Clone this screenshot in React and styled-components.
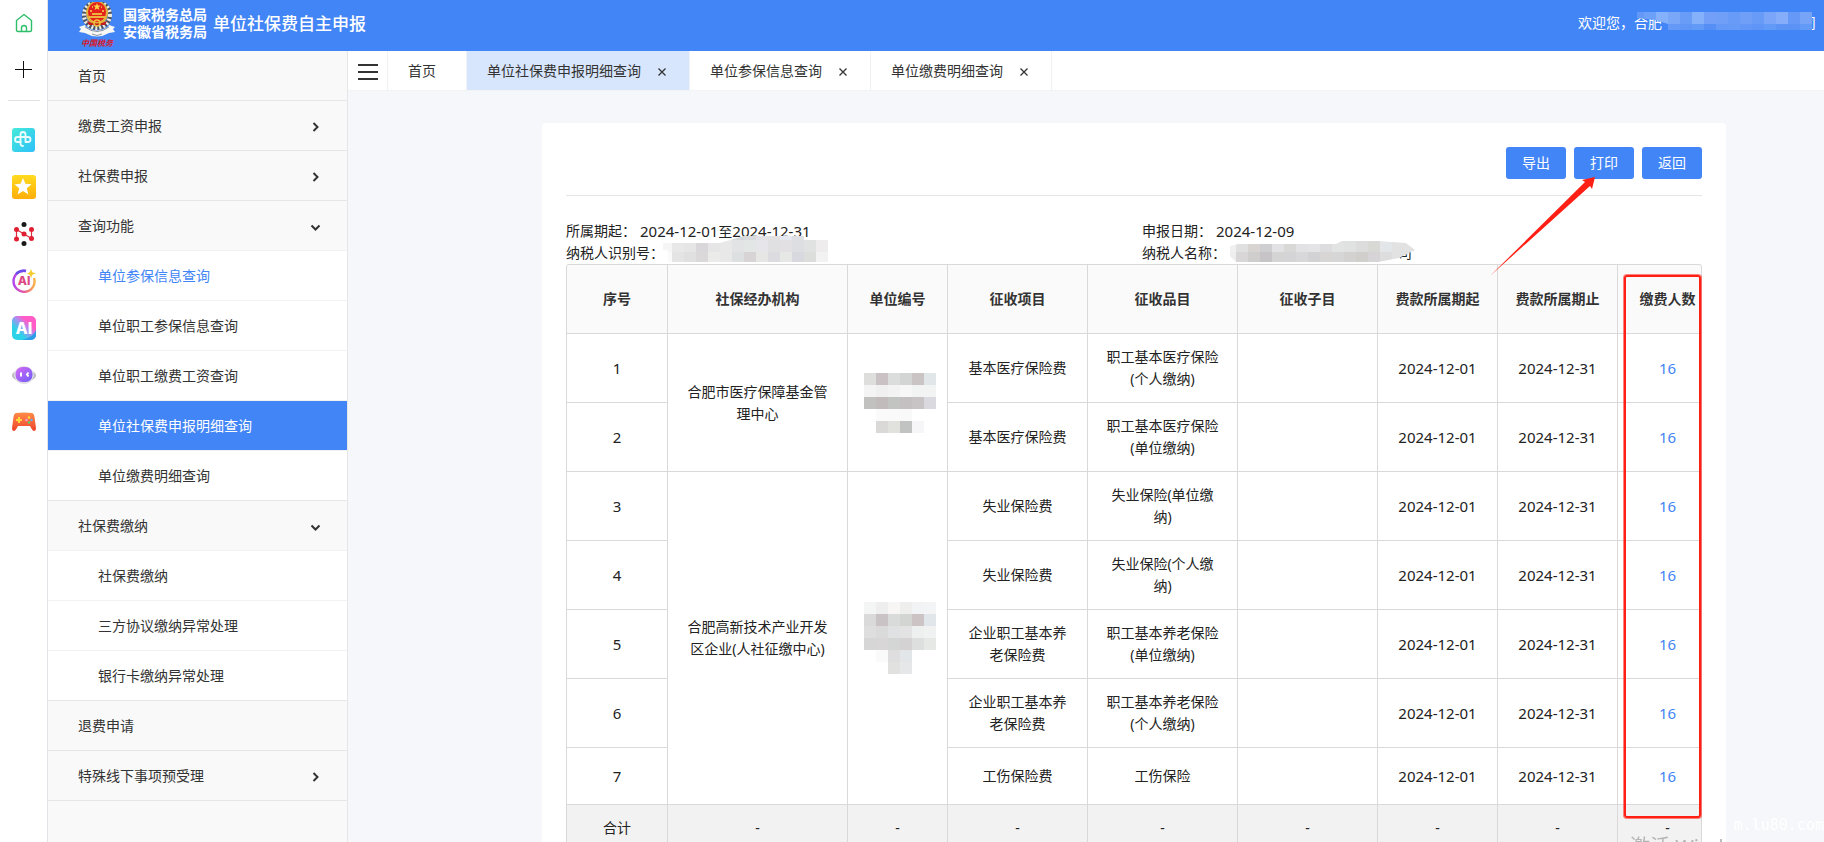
import React, { useState } from 'react';
import styled, { createGlobalStyle } from 'styled-components'

const GlobalStyle = createGlobalStyle`
    * {
        box-sizing: border-box;
    }
    body {
        margin: 0;
        font-family: "Noto Sans", "Noto Sans CJK SC", sans-serif;
        font-size: 14px;
        line-height: 22px;
        color: #333333;
    }
    button {
        font: inherit;
        color: inherit;
        border: none;
        background: none;
        padding: 0;
        cursor: pointer;
    }
    a {
        color: inherit;
        text-decoration: none;
    }
`

const Page = styled.div`
    display: flex;
    height: 100vh;
    overflow: hidden;
    background: #f6f7fa;
`

/* browser rail */

const Rail = styled.aside`
    flex: none;
    width: 48px;
    background: #ffffff;
    border-right: 1px solid #e2e3e6;
    display: flex;
    flex-direction: column;
    align-items: center;
`

const RailButton = styled.button`
    width: 47px;
    height: 47px;
    padding-bottom: 2px;
    display: flex;
    align-items: center;
    justify-content: center;
`

const RailLine = styled.hr`
    width: 32px;
    height: 1px;
    border: none;
    background: #e2e2e2;
    margin: 6px 0 16px;
`

/* header */

const Shell = styled.div`
    flex: 1;
    min-width: 0;
    display: flex;
    flex-direction: column;
`

const Header = styled.header`
    flex: none;
    height: 51px;
    padding: 0 8px 0 30px;
    display: flex;
    align-items: center;
    background: #4285f6;
    color: #ffffff;
`

const Bureau = styled.div`
    margin-left: 8px;
    font-size: 14px;
    font-weight: 700;
    line-height: 17px;
    padding-bottom: 5px;
`

const SystemName = styled.h1`
    margin: 0 0 0 6px;
    font-size: 17px;
    font-weight: 500;
    line-height: 24px;
    padding-bottom: 4px;
`

const Welcome = styled.div`
    position: relative;
    margin-left: auto;
    padding-bottom: 6px;
    width: 238px;
    display: flex;
    justify-content: space-between;
`

const Body = styled.div`
    flex: 1;
    min-height: 0;
    display: flex;
`

/* side menu */

const Menu = styled.nav`
    flex: none;
    width: 300px;
    background: #f9f9f9;
    border-right: 1px solid #e6e6e6;
    overflow: hidden;
`

const MenuItem = styled.button`
    width: 100%;
    height: 50px;
    padding: 0 26px 0 30px;
    display: flex;
    align-items: center;
    justify-content: space-between;
    border-bottom: 1px solid ${props => props.$open ? '#f2f2f2' : '#e6e6e6'};
    svg {
        margin-top: 2px;
    }
`

const SubMenu = styled.div`
    background: #ffffff;
    border-bottom: 1px solid #e6e6e6;
`

const SubItem = styled.a`
    display: flex;
    align-items: center;
    height: 50px;
    padding-left: 50px;
    border-bottom: 1px solid #f2f2f2;
    background: ${props => props.$active ? '#4285f6' : 'none'};
    background-clip: padding-box;
    color: ${props => props.$active ? '#ffffff' : props.$hover ? '#4285f6' : '#333333'};
    &:last-child {
        height: 49px;
        border-bottom: none;
    }
`

/* tabs */

const Main = styled.main`
    flex: 1;
    min-width: 0;
`

const Tabs = styled.div`
    height: 40px;
    display: flex;
    background: #ffffff;
    border-bottom: 1px solid #f2f3f4;
`

const Fold = styled.button`
    width: 40px;
    display: flex;
    align-items: center;
    padding: 3px 0 0 10px;
    border-right: 1px solid #f0f1f3;
`

const Tab = styled.div`
    display: flex;
    align-items: center;
    gap: 17px;
    padding: 0 ${props => props.$closable ? '23px' : '30px'} 0 20px;
    border-right: 1px solid #f0f1f3;
    background: ${props => props.$active ? '#d8e6fd' : '#ffffff'};
`

const Close = styled.button`
    width: 8px;
    height: 8px;
    display: flex;
    margin-top: 3px;
`

/* report */

const Card = styled.section`
    position: relative;
    margin: 32px 98px 0 194px;
    padding: 24px;
    background: #ffffff;
    border-radius: 4px;
`

const Actions = styled.div`
    display: flex;
    justify-content: flex-end;
    gap: 8px;
    padding-bottom: 16px;
    border-bottom: 1px solid #e6e6e6;
`

const Action = styled.button`
    width: 60px;
    height: 32px;
    border-radius: 3px;
    background: #4285f6;
    color: #ffffff;
`

const Info = styled.div`
    display: grid;
    grid-template-columns: 1fr 1fr;
    column-gap: 16px;
    margin-top: 24px;
    color: #222222;
`

const Field = styled.div`
    display: flex;
    position: relative;
    height: 22px;
`

const Value = styled.span`
    margin-left: 4px;
`

const Num = styled.span`
    font-size: 15px;
`

const NameTail = styled.span`
    margin-left: 172px;
`

const TableBox = styled.div`
    position: relative;
`

const TableWrap = styled.div`
    overflow: hidden;
    border: 1px solid #d9d9d9;
    border-bottom: none;
    border-radius: 3px 3px 0 0;
`

const Table = styled.table`
    width: 1151px;
    table-layout: fixed;
    border-collapse: separate;
    border-spacing: 0;
    color: #222222;
    text-align: center;
`

const Th = styled.th`
    height: 69px;
    padding: 0 12px;
    background: #fafafa;
    color: #333333;
    font-weight: 700;
    border-right: 1px solid #d9d9d9;
    border-bottom: 1px solid #d9d9d9;
`

const Row = styled.tr`
    height: ${props => props.$h || 69}px;
`

const Td = styled.td`
    padding: 0 16px;
    border-right: 1px solid #d9d9d9;
    border-bottom: 1px solid #d9d9d9;
    background: ${props => props.$total ? '#f2f2f2' : '#ffffff'};
`

const Count = styled.a`
    font-size: 15px;
    color: #4285f6;
`

/* marks drawn over the report */

const RedFrame = styled.div`
    position: absolute;
    top: 11px;
    right: 1px;
    width: 77px;
    height: 543px;
    border: 2px solid #ff1f14;
    border-radius: 3px;
    box-shadow: 0 0 0 1px rgba(255, 31, 20, 0.55);
    pointer-events: none;
`

const RedArrow = styled.svg`
    position: absolute;
    top: 54px;
    right: 130px;
    pointer-events: none;
`

const Cover = styled.svg`
    position: absolute;
    left: ${props => props.$left}px;
    top: ${props => props.$top}px;
`

const InlineCover = styled.svg`
    display: block;
    margin: 0 auto;
`

const SiteMark = styled.div`
    position: fixed;
    right: 0;
    bottom: 6px;
    font-family: "DejaVu Sans Mono", monospace;
    font-size: 15px;
    color: #ffffff;
`

const Activate = styled.div`
    position: fixed;
    right: 0;
    bottom: 0;
    width: 194px;
    height: 7px;
    overflow: hidden;
    font-size: 20px;
    line-height: 24px;
    color: #b4b4b4;
`

// rows of colours, every cell is 12px wide
const Cells = ({ rows, heights }) => {
    let y = 0
    return rows.map((row, r) => {
        const top = y
        const h = heights ? heights[r] : 12
        y += h
        return row.split(' ').map((c, i) => c === '-' ? null :
            <rect key={r + '-' + i} x={i * 12} y={top} width="12" height={h} fill={'#' + c} shapeRendering="crispEdges" />)
    })
}

const welcomeRows = [
    '6499f7 6da0f8 85b0fa 7ba7f8 689cf7 85b0fa 739ff8 6f9ff7 689af7 6f9ff7 689af7 7aa5f8 85adfa 6698f7 78a4f8',
    '- - - 6499f7 6097f7 629af8 558ff6 6599f7 659af7 6297f7 5e95f6 629af7 5c94f6 5a92f6 629af7',
]
const taxNoRows = [
    '- - - - - e8e8ea d4d8da d9dadb e2e2e6 e2e0e2 e8e8f0 dfe0e4 e2e4e4 -',
    'f5f5f5 e8e8e8 e6e6e6 d9d7d9 e6e6e6 e8e8e8 e2e3e5 e2e6e4 e6e6ea e0dfe2 e2e0e2 dcdee2 e0e1e1 eeeced',
    'fafafa e4e4e4 e0e0e0 dbd8da ebebe9 e8e8e8 dde0e0 d8d4d6 e6e6e4 dcdce0 e6e8e6 d8d9de dcdedc f2f2f2',
]
const nameRows = [
    'f0f0f0 e0e0e0 d8d4d2 cfcfd2 e2e2e4 d8d8d6 e2e2e4 e4e4e6 dddddf e2e4e4 e0e2e2 dcdcdc d8d8d4 e2e6e8 e2e2e2 e2e2e2',
    'eeeeee d8d6d6 cfcecc c6c4c6 d4d4d4 d4d4d6 d8d8da d2d2d4 d8d6d4 d6d6d6 d4d2d0 d0cfcb d6d4d6 dddddd e2e2e2 e2e2e2',
]
const unitRows1 = [
    'dededd c9c1c3 dbdddc d3d5d4 cbc4c5 e1e6e9',
    'f4f4f4 f0f0f0 f3f3f3 f6f7f6 f2f3f3 f2f4f4',
    'c1c2c0 c1bcbb c2c4c2 c4c0c2 c8c4c6 dad9df',
    '- fafafa fafafa f9f9f9 - -',
    '- dbd8d8 e1e1de c1c3c2 f6f6f8 -',
]
const unitRows2 = [
    'f4f5f5 eeeeee f8f6f5 eeeeec f2f3f5 f3f4f5',
    'dadada c9c3c5 d9dbda d3d5d3 cbc3c4 e1e6ea',
    'dedede dadada e0e1e2 e3e3e4 eef0f0 f0f2f1',
    'd6d6d7 d9d6d7 d4d6d5 d4d2d3 dddfde e6e8e6',
    '- fafafa dedede e3e6e8 - -',
    '- - e1e1e0 e6e7e8 - -',
]

const Emblem = () => (
    <svg width="37" height="48" viewBox="0 0 37 48">
        <circle cx="19" cy="13" r="13" fill="none" stroke="#4c5360" strokeWidth="4" />
        <circle cx="19" cy="13" r="13" fill="none" stroke="#e9e9e6" strokeWidth="4" strokeDasharray="2 2" />
        <ellipse cx="19" cy="11" rx="11" ry="12" fill="#e2b13c" />
        <ellipse cx="19" cy="10" rx="9" ry="10" fill="#e5211c" />
        <path d="M19 1l1 2.600h2.700l-2.100 1.700.8 2.700-2.400-1.600-2.400 1.600.8-2.700-2.100-1.700h2.700z" fill="#f8d648" />
        <path d="M12 9h2M24 9h2M14 5h1M23 5h1" stroke="#f8d648" strokeWidth="1.500" />
        <path d="M11 14h16v2H11zM14 11h10v2H14z" fill="#edb33a" />
        <path d="M9 19q10 5 20 0l-2 4H11z" fill="#c91d18" />
        <circle cx="19" cy="21" r="3" fill="none" stroke="#f0c03e" strokeWidth="1.500" />
        <path d="M1 25l6-2 1 2q11 7 22 0l1-2 6 2-2 2 2 3-6 1q-12 7-24 0l-6-1 2-3z" fill="#f7f7f5" />
        <path d="M7 25q12 9 24 0M14 32q5 3 10 0" fill="none" stroke="#8d95a0" strokeWidth="1" />
        <text x="3" y="44" fontSize="8" fontWeight="700" fontStyle="italic" fill="#d8182a">中国税务</text>
    </svg>
)

const ChevronRight = () => (
    <svg width="11" height="12" viewBox="0 0 11 12"><path d="M3.500 2l4 4-4 4" fill="none" stroke="#333" strokeWidth="2" /></svg>
)

const ChevronDown = () => (
    <svg width="11" height="12" viewBox="0 0 11 12"><path d="M1.500 4.500l4 4 4-4" fill="none" stroke="#333" strokeWidth="2" /></svg>
)

const CloseIcon = () => (
    <svg width="8" height="8" viewBox="0 0 8 8"><path d="M.5 .5l7 7M7.500 .5l-7 7" stroke="#333" strokeWidth="1.300" /></svg>
)

const HomeIcon = () => (
    <svg width="18" height="20" viewBox="0 0 18 20" fill="none" stroke="#2fbf6b" strokeWidth="1.400" strokeLinejoin="round">
        <path d="M1.500 7.500L9 1.500l7.500 6V17q0 1.500-1.500 1.500H3q-1.500 0-1.500-1.500z" />
        <path d="M6.500 18.500V15a2.500 2.500 0 0 1 5 0v3.500" />
    </svg>
)

const PlusIcon = () => (
    <svg width="17" height="17" viewBox="0 0 17 17"><path d="M8.500 0v17M0 8.500h17" stroke="#111" strokeWidth="1" /></svg>
)

const CloverIcon = () => (
    <svg width="24" height="24" viewBox="0 0 24 24">
        <defs><linearGradient id="clover" x1="0" y1="0" x2="1" y2="1"><stop stopColor="#45ead8" /><stop offset="1" stopColor="#2fc0fa" /></linearGradient></defs>
        <rect width="23" height="24" rx="3" fill="url(#clover)" />
        <path d="M9 14H5.500a2.500 2.500 0 0 1 0-5H16a2.500 2.500 0 0 1 0 5h-2.500M8.500 16V6.500a2.500 2.500 0 0 1 5 0V14M8.500 15.500q0 2.500 2.500 2.500" fill="none" stroke="#eafcff" strokeWidth="1.800" strokeLinecap="round" />
    </svg>
)

const StarIcon = () => (
    <svg width="24" height="24" viewBox="0 0 24 24">
        <defs><linearGradient id="star" x1="0" y1="0" x2="0" y2="1"><stop stopColor="#ffdb20" /><stop offset="1" stopColor="#ffae08" /></linearGradient></defs>
        <rect width="24" height="24" rx="3" fill="url(#star)" />
        <path d="M11 3l2.400 5.800 6.200.4-4.800 4 1.600 6.200-5.400-3.400-5.400 3.400 1.600-6.200-4.800-4 6.200-.4z" fill="#fff" />
    </svg>
)

const NodesIcon = () => (
    <svg width="24" height="24" viewBox="0 0 24 24">
        <path d="M4.500 17V7.500l15 9V7.500" fill="none" stroke="#dd2c3d" strokeWidth="1.200" />
        <g fill="#e01f33">
            <circle cx="4.500" cy="7.500" r="2.500" /><circle cx="4.500" cy="17" r="2.500" /><circle cx="12" cy="12" r="2.500" />
            <circle cx="19.500" cy="7.500" r="2.500" /><circle cx="19.500" cy="16.500" r="2.500" />
        </g>
        <circle cx="12" cy="2.500" r="2.500" fill="#1a1a1a" />
        <circle cx="12" cy="21.500" r="2.500" fill="#1a1a1a" />
    </svg>
)

const AiRingIcon = () => (
    <svg width="24" height="24" viewBox="0 0 24 24">
        <defs><linearGradient id="ring" x1="0" y1="0" x2="1" y2="0"><stop stopColor="#b044ee" /><stop offset=".5" stopColor="#e85a9c" /><stop offset="1" stopColor="#f9b44a" /></linearGradient></defs>
        <path d="M14 2A10.500 10.500 0 1 0 22 9" fill="none" stroke="url(#ring)" strokeWidth="2.400" />
        <path d="M4 5A10.500 10.500 0 0 1 14 2" fill="none" stroke="#6a4df0" strokeWidth="2.400" />
        <text x="12" y="16" textAnchor="middle" fontFamily="Inter" fontSize="12" fontWeight="800" fill="#dc4a86">AI</text>
        <path d="M19 0l1.300 3.200L24 4.500l-3.700 1.300L19 9l-1.300-3.200L15 4.500l2.700-1.300z" fill="#f3ce2e" />
    </svg>
)

const AiSquareIcon = () => (
    <svg width="24" height="24" viewBox="0 0 24 24">
        <defs><linearGradient id="aisq" x1="0" y1="1" x2="1" y2="0"><stop offset=".3" stopColor="#2ed2e8" /><stop offset=".55" stopColor="#b08cf0" /><stop offset=".7" stopColor="#ff5cc8" /></linearGradient></defs>
        <rect width="24" height="24" rx="5" fill="url(#aisq)" />
        <path d="M24 14v5a5 5 0 0 1-5 5h-9q12-3 14-10z" fill="#2a9de8" />
        <text x="12" y="18" textAnchor="middle" fontFamily="Inter" fontSize="16" fontWeight="800" fill="#ffffff">AI</text>
    </svg>
)

const RobotIcon = () => (
    <svg width="24" height="20" viewBox="0 0 24 20">
        <defs><linearGradient id="robot" x1="0" y1="0" x2="1" y2="1"><stop stopColor="#d86af5" /><stop offset="1" stopColor="#6d5cfa" /></linearGradient></defs>
        <ellipse cx="12" cy="10.500" rx="12" ry="6" fill="#bcbcc2" />
        <ellipse cx="12" cy="10" rx="10" ry="9" fill="#dcdce2" />
        <rect x="3.500" y="2" width="17" height="15" rx="7" fill="url(#robot)" />
        <path d="M9 7.500v4M16.500 7.500l-1.500 2 1.500 2" fill="none" stroke="#fff" strokeWidth="2" />
    </svg>
)

const GamepadIcon = () => (
    <svg width="24" height="20" viewBox="0 0 24 20">
        <defs><linearGradient id="pad" x1="0" y1="0" x2="0" y2="1"><stop stopColor="#ff8b48" /><stop offset="1" stopColor="#ee442c" /></linearGradient></defs>
        <path d="M4 1q8-1 16 0 2 .5 2.500 4L24 16q0 3-2 3-1.500 0-4-5H6q-2.500 5-4 5-2 0-2-3L1.500 5Q2 1.500 4 1z" fill="url(#pad)" />
        <path d="M7 5v6M4 8h6" stroke="#ffd83c" strokeWidth="2" />
        <circle cx="17" cy="5.500" r="1.200" fill="#ffe13c" /><circle cx="17" cy="10.500" r="1.200" fill="#5dd06a" />
        <circle cx="14.500" cy="8" r="1.200" fill="#f69ae0" /><circle cx="19.500" cy="8" r="1.200" fill="#5bb4f5" />
    </svg>
)

const railIcons = [
    ['四叶草', CloverIcon], ['收藏', StarIcon], ['节点', NodesIcon], ['AI 创作', AiRingIcon],
    ['AI 助手', AiSquareIcon], ['机器人', RobotIcon], ['游戏', GamepadIcon],
]

const menu = [
    { title: '首页' },
    { title: '缴费工资申报', arrow: true },
    { title: '社保费申报', arrow: true },
    { title: '查询功能', items: ['单位参保信息查询', '单位职工参保信息查询', '单位职工缴费工资查询', '单位社保费申报明细查询', '单位缴费明细查询'] },
    { title: '社保费缴纳', items: ['社保费缴纳', '三方协议缴纳异常处理', '银行卡缴纳异常处理'] },
    { title: '退费申请' },
    { title: '特殊线下事项预受理', arrow: true },
]

const tabs = ['首页', '单位社保费申报明细查询', '单位参保信息查询', '单位缴费明细查询']

const columns = [
    ['序号', 101], ['社保经办机构', 180], ['单位编号', 100], ['征收项目', 140], ['征收品目', 150],
    ['征收子目', 140], ['费款所属期起', 120], ['费款所属期止', 120], ['缴费人数', 100],
]

const records = [
    { office: '合肥市医疗保障基金管理中心', span: 2, unit: unitRows1, item: '基本医疗保险费', kind: '职工基本医疗保险(个人缴纳)' },
    { item: '基本医疗保险费', kind: '职工基本医疗保险(单位缴纳)' },
    { office: '合肥高新技术产业开发区企业(人社征缴中心)', span: 5, unit: unitRows2, item: '失业保险费', kind: '失业保险(单位缴纳)' },
    { item: '失业保险费', kind: '失业保险(个人缴纳)' },
    { item: '企业职工基本养老保险费', kind: '职工基本养老保险(单位缴纳)' },
    { item: '企业职工基本养老保险费', kind: '职工基本养老保险(个人缴纳)' },
    { item: '工伤保险费', kind: '工伤保险', height: 57 },
]

const SideMenu = ({ active, onSelect }) => (
    <Menu>
        {menu.map((group) => <React.Fragment key={group.title}>
            <MenuItem $open={!!group.items}>
                {group.title}
                {group.items ? <ChevronDown /> : group.arrow ? <ChevronRight /> : null}
            </MenuItem>
            {group.items ? <SubMenu>
                {group.items.map((item) => (
                    <SubItem key={item} href="#" $active={item === active} $hover={item === '单位参保信息查询'} onClick={() => onSelect(item)}>{item}</SubItem>
                ))}
            </SubMenu> : null}
        </React.Fragment>)}
    </Menu>
)

const ReportTable = () => (
    <TableBox>
        <TableWrap>
            <Table>
                <colgroup>{columns.map(([name, width]) => <col key={name} width={width} />)}</colgroup>
                <thead>
                    <tr>{columns.map(([name]) => <Th key={name}>{name}</Th>)}</tr>
                </thead>
                <tbody>
                    {records.map((r, i) => <Row key={i} $h={r.height}>
                        <Td><Num>{i + 1}</Num></Td>
                        {r.span ? <Td rowSpan={r.span}>{r.office}</Td> : null}
                        {r.span ? <Td rowSpan={r.span}>
                            <InlineCover width="72" height={r.unit.length * 12}><Cells rows={r.unit} /></InlineCover>
                        </Td> : null}
                        <Td>{r.item}</Td>
                        <Td>{r.kind}</Td>
                        <Td></Td>
                        <Td><Num>2024-12-01</Num></Td>
                        <Td><Num>2024-12-31</Num></Td>
                        <Td><Count href="#">16</Count></Td>
                    </Row>)}
                    <Row $h={47}>
                        {columns.map(([name], i) => <Td key={name} $total>{i === 0 ? '合计' : '-'}</Td>)}
                    </Row>
                </tbody>
            </Table>
        </TableWrap>
        <RedFrame />
    </TableBox>
)

const App = () => {
    const [active, setActive] = useState('单位社保费申报明细查询')
    return (
        <Page>
            <GlobalStyle />
            <Rail>
                <RailButton aria-label="主页"><HomeIcon /></RailButton>
                <RailButton aria-label="添加"><PlusIcon /></RailButton>
                <RailLine />
                {railIcons.map(([name, Icon]) => <RailButton key={name} aria-label={name}><Icon /></RailButton>)}
            </Rail>
            <Shell>
                <Header>
                    <Emblem />
                    <Bureau>国家税务总局<br />安徽省税务局</Bureau>
                    <SystemName>单位社保费自主申报</SystemName>
                    <Welcome>
                        <span>欢迎您，合肥</span>
                        <span>司</span>
                        <Cover $left={54} $top={0} width="182" height="18">
                            <clipPath id="welcomeClip"><path d="M5 0h175v18H36v-6L24 8 5 6z" /></clipPath>
                            <g clipPath="url(#welcomeClip)"><Cells rows={welcomeRows} /></g>
                        </Cover>
                    </Welcome>
                </Header>
                <Body>
                    <SideMenu active={active} onSelect={setActive} />
                    <Main>
                        <Tabs>
                            <Fold aria-label="收起菜单">
                                <svg width="20" height="16"><path d="M0 1h20M0 8h20M0 15h20" stroke="#333" strokeWidth="2" /></svg>
                            </Fold>
                            {tabs.map((tab, i) => <Tab key={tab} $active={tab === active} $closable={i > 0}>
                                <button onClick={() => setActive(tab)}>{tab}</button>
                                {i > 0 ? <Close aria-label="关闭"><CloseIcon /></Close> : null}
                            </Tab>)}
                        </Tabs>
                        <Card>
                            <Actions>
                                <Action>导出</Action>
                                <Action>打印</Action>
                                <Action>返回</Action>
                            </Actions>
                            <Info>
                                <Field>所属期起：<Value><Num>2024-12-01</Num>至<Num>2024-12-31</Num></Value></Field>
                                <Field>申报日期：<Value><Num>2024-12-09</Num></Value></Field>
                                <Field>
                                    纳税人识别号：
                                    <Cover $left={94} $top={-6} width="168" height="26">
                                        <clipPath id="taxNoClip"><path d="M3 7h57L84 0h60v4h24v22H8V14H3z" /></clipPath>
                                        <g clipPath="url(#taxNoClip)"><Cells rows={taxNoRows} heights={[4, 12, 10]} /></g>
                                    </Cover>
                                </Field>
                                <Field>
                                    纳税人名称：
                                    <NameTail>司</NameTail>
                                    <Cover $left={82} $top={-1} width="192" height="21">
                                        <clipPath id="nameClip"><path d="M6 5l8-2h98l6-3h36l28 2 9 7-16 8-21 4H12l-6-6z" /></clipPath>
                                        <g clipPath="url(#nameClip)"><Cells rows={nameRows} heights={[11, 10]} /></g>
                                    </Cover>
                                </Field>
                            </Info>
                            <ReportTable />
                            <RedArrow width="108" height="100" viewBox="0 0 108 100">
                                <path d="M2 99L97 5l-3-2L107 0l-3 12-2-3z" fill="#ff1f14" />
                            </RedArrow>
                        </Card>
                    </Main>
                </Body>
            </Shell>
            <Activate>激活 Windows</Activate>
            <SiteMark>m.lu80.com</SiteMark>
        </Page>
    );
}

export default App;
